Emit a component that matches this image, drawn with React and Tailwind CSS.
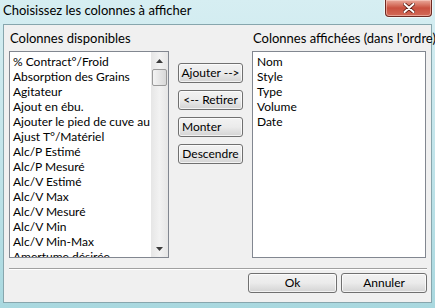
import React from "react";

const font = { fontFamily: 'Lato, "Noto Sans", sans-serif' };

const leftItems = [
  "% Contract°/Froid",
  "Absorption des Grains",
  "Agitateur",
  "Ajout en ébu.",
  "Ajouter le pied de cuve au",
  "Ajust T°/Matériel",
  "Alc/P Estimé",
  "Alc/P Mesuré",
  "Alc/V Estimé",
  "Alc/V Max",
  "Alc/V Mesuré",
  "Alc/V Min",
  "Alc/V Min-Max",
  "Amertume désirée",
];

const rightItems = ["Nom", "Style", "Type", "Volume", "Date"];

function Btn({ children, className = "" }) {
  return (
    <div
      className={
        "flex items-center justify-center h-[20px] rounded-[3px] border border-[#707070] bg-gradient-to-b from-[#f2f2f2] via-[#ebebeb] to-[#d3d3d3] text-[12px] text-black shadow-[inset_0_0_0_1px_rgba(255,255,255,0.7)] " +
        className
      }
    >
      {children}
    </div>
  );
}

function Arrow({ up }) {
  return (
    <svg width="7" height="4" viewBox="0 0 7 4">
      {up ? (
        <path d="M0 4 L3.5 0 L7 4 Z" fill="#3b3b3b" />
      ) : (
        <path d="M0 0 L7 0 L3.5 4 Z" fill="#3b3b3b" />
      )}
    </svg>
  );
}

export default function App() {
  return (
    <div
      className="w-[435px] h-[308px] flex flex-col bg-gradient-to-b from-[#d6eef2] via-[#c2e4ea] to-[#a9d8df] overflow-hidden"
      style={font}
    >
      <div className="h-[24px] flex items-start justify-between">
        <div className="pl-[3px] pt-[3px] text-[13px] leading-[15px] text-black">
          Choisissez les colonnes à afficher
        </div>
        <div className="mr-[3px] w-[47px] h-[17px] rounded-b-[4px] border border-t-0 border-[#6e2a22] bg-gradient-to-b from-[#e9a99c] via-[#c9503f] to-[#d26a58] flex items-center justify-center shadow-[inset_0_0_0_1px_rgba(255,220,210,0.5),0_0_0_1px_rgba(255,255,255,0.6)]">
          <svg width="12" height="10" viewBox="0 0 12 10">
            <path
              d="M1.5 1 L10.5 9 M10.5 1 L1.5 9"
              stroke="#5a1a12"
              strokeWidth="3.6"
              strokeLinecap="round"
            />
            <path
              d="M1.5 1 L10.5 9 M10.5 1 L1.5 9"
              stroke="#ffffff"
              strokeWidth="2"
              strokeLinecap="round"
            />
          </svg>
        </div>
      </div>

      <div className="flex-1 mx-[3px] mb-[5px] border border-[#87a6ad] bg-[#f0f0f0] flex flex-col pl-[5px] pt-[6px]">
        <div className="flex">
          <div className="w-[160px] flex flex-col">
            <div className="h-[15px] leading-[15px] text-[13px] pl-[1px] mb-[5px] whitespace-nowrap">
              Colonnes disponibles
            </div>
            <div className="h-[207px] border border-[#828790] bg-white flex overflow-hidden">
              <div className="flex-1 pl-[3px] pt-[2px] overflow-hidden">
                {leftItems.map((t) => (
                  <div
                    key={t}
                    className="h-[15px] leading-[15px] text-[12px] whitespace-nowrap"
                  >
                    {t}
                  </div>
                ))}
              </div>
              <div className="w-[17px] flex flex-col bg-gradient-to-r from-[#e6e6e6] via-[#f2f2f2] to-[#e6e6e6]">
                <div className="h-[17px] flex items-center justify-center">
                  <Arrow up />
                </div>
                <div className="mx-[1px] h-[17px] rounded-[2px] border border-[#9a9a9a] bg-gradient-to-r from-[#f4f4f4] via-[#e6e6e6] to-[#d8d8d8]" />
                <div className="flex-1" />
                <div className="h-[17px] flex items-center justify-center">
                  <Arrow />
                </div>
              </div>
            </div>
          </div>

          <div className="ml-[9px] w-[65px] pt-[32px] flex flex-col gap-[7px]">
            <Btn>Ajouter --&gt;</Btn>
            <Btn>&lt;-- Retirer</Btn>
            <Btn className="justify-start pl-[3px]">Monter</Btn>
            <Btn>Descendre</Btn>
          </div>

          <div className="ml-[9px] w-[174px] flex flex-col">
            <div className="h-[15px] leading-[15px] text-[13px] pl-[1px] mb-[5px] whitespace-nowrap">
              Colonnes affichées (dans l'ordre)
            </div>
            <div className="h-[207px] border border-[#828790] bg-white pl-[4px] pt-[2px]">
              {rightItems.map((t) => (
                <div key={t} className="h-[15px] leading-[15px] text-[12px]">
                  {t}
                </div>
              ))}
            </div>
          </div>
        </div>

        <div className="mt-[10px] w-[418px] h-[2px] border-t border-[#a0a0a0] border-b border-b-white" />

        <div className="mt-[3px] w-[418px] flex justify-end gap-[4px]">
          <Btn className="w-[89px] text-[12.5px]">Ok</Btn>
          <Btn className="w-[86px] text-[12.5px]">Annuler</Btn>
        </div>
      </div>
    </div>
  );
}
